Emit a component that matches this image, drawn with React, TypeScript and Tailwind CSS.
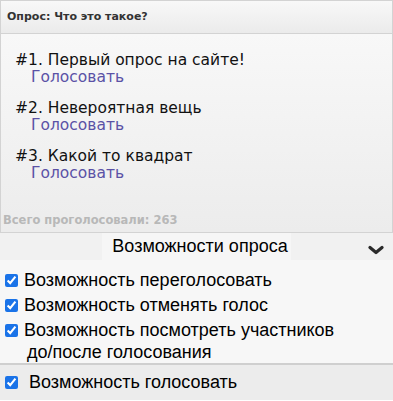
import { useState } from "react";

const answers = [
  { id: 1, title: "Первый опрос на сайте!" },
  { id: 2, title: "Невероятная вещь" },
  { id: 3, title: "Какой то квадрат" },
];

const options = [
  { id: "revote", label: "Возможность переголосовать" },
  { id: "cancel", label: "Возможность отменять голос" },
  { id: "members", label: "Возможность посмотреть участников до/\u2060после голосования" },
];

function Chevron() {
  return (
    <svg width="16" height="10" viewBox="0 0 16 10" className="text-[#2a2a2a]">
      <path d="M2 2.5 L8 7.5 L14 2.5" fill="none" stroke="currentColor" strokeWidth="3.2" strokeLinecap="round" strokeLinejoin="round" />
    </svg>
  );
}

export default function App() {
  const [checked, setChecked] = useState<Record<string, boolean>>({
    revote: true,
    cancel: true,
    members: true,
    vote: true,
  });

  const toggle = (id: string) => setChecked((c) => ({ ...c, [id]: !c[id] }));

  return (
    <div className="w-[393px] h-[401px] overflow-hidden bg-white">
      {/* опрос */}
      <div className="border border-[#d3d3d3]">
        <div className="h-[33px] flex items-center px-[6px] border-b border-[#d3d3d3] bg-gradient-to-b from-[#f8f8f8] to-[#ebebeb]">
          <span className="font-['DejaVu_Sans',sans-serif] font-bold text-[11px] text-[#333]">Опрос: Что это такое?</span>
        </div>
        <div className="h-[198px] flex flex-col bg-gradient-to-b from-[#f8f8f8] to-[#ececec] font-['DejaVu_Sans',sans-serif]">
          <div className="flex flex-col gap-[15px] pt-[18px] pl-[14px]">
            {answers.map((a) => (
              <div key={a.id} className="flex flex-col">
                <div className="text-[15.5px] leading-[17px] text-[#111]">#{a.id}. {a.title}</div>
                <a className="pl-[16px] text-[15.5px] leading-[16px] text-[#5b52a6] cursor-pointer">Голосовать</a>
              </div>
            ))}
          </div>
          <div className="mt-auto pl-[2px] pb-[5px] text-[11.5px] font-bold text-[#b8b8b8] leading-[14px]">
            Всего проголосовали: 263
          </div>
        </div>
      </div>

      {/* возможности */}
      <div className="font-['Liberation_Sans',Arial,sans-serif] text-black">
        <div className="relative h-[27px] flex items-center justify-center bg-[#f1f1f1]">
          <span className="bg-[#f6f6f6] px-[3px] h-full flex items-center text-[18px] pl-[10px]">Возможности опроса</span>
          <div className="absolute right-[9px] top-[12px]">
            <Chevron />
          </div>
        </div>
        <div className="h-[105px] bg-[#f7f7f7] pt-[9px] flex flex-col gap-[3px] border-b-2 border-[#cfcfcf]">
          {options.map((o) => (
            <label key={o.id} className="flex items-start gap-[6px] pl-[5px] pr-[10px] text-[18px] leading-[22px] cursor-pointer">
              <input
                type="checkbox"
                checked={checked[o.id]}
                onChange={() => toggle(o.id)}
                className="mt-[5px] w-[13px] h-[13px] m-0 shrink-0 accent-[#1a73e8]"
              />
              <span className="pl-[3px] -indent-[3px]">{o.label}</span>
            </label>
          ))}
        </div>
        <label className="h-[35px] flex items-center gap-[11px] pl-[5px] bg-[#ececec] text-[18px] cursor-pointer">
          <input
            type="checkbox"
            checked={checked.vote}
            onChange={() => toggle("vote")}
            className="w-[13px] h-[13px] m-0 shrink-0 accent-[#1a73e8]"
          />
          <span>Возможность голосовать</span>
        </label>
      </div>
    </div>
  );
}
